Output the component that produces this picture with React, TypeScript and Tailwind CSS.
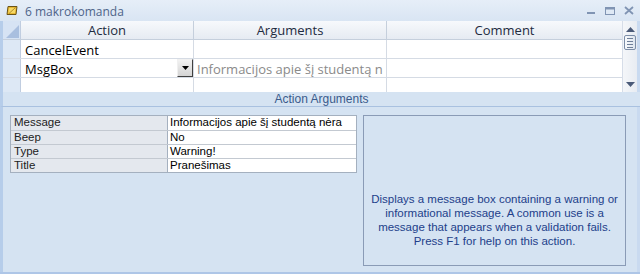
const gridFont = { fontFamily: '"Open Sans", "Noto Sans", sans-serif' };

function MacroIcon() {
  return (
    <svg width="12" height="11" viewBox="0 0 12 11">
      <path d="M2 1.5 H11 L10 9.5 H1 Z" fill="#e8b830" stroke="#6b5418" strokeWidth="1" />
      <path d="M3 3 H9.5 L9 8 H2.5 Z" fill="#f6d866" />
      <path d="M3 8.5 L9.5 2.5" stroke="#a07a1a" strokeWidth="0.8" />
    </svg>
  );
}

function WindowButtons() {
  return (
    <div className="flex items-center gap-[9px] pr-[6px]">
      <svg width="9" height="9" viewBox="0 0 9 9">
        <rect x="0" y="6" width="8" height="2" fill="#8094b3" />
      </svg>
      <svg width="10" height="9" viewBox="0 0 10 9">
        <rect x="0.5" y="1.5" width="9" height="7" fill="none" stroke="#8094b3" />
        <rect x="0.5" y="1.5" width="9" height="2" fill="#8094b3" />
      </svg>
      <svg width="10" height="9" viewBox="0 0 10 9">
        <path d="M1 1 L9 8 M9 1 L1 8" stroke="#8094b3" strokeWidth="1.8" />
      </svg>
    </div>
  );
}

function Scrollbar() {
  return (
    <div className="w-[15px] flex flex-col items-center bg-gradient-to-r from-[#f4f6f9] to-[#e8ecf2] border-l border-[#d6dde8]">
      <svg width="9" height="5" viewBox="0 0 9 5" className="mt-[6px]">
        <path d="M0 5 L4.5 0 L9 5 Z" fill="#4a5a78" />
      </svg>
      <div className="mt-[3px] w-[12px] h-[15px] rounded-[2px] border border-[#7d8ea8] bg-gradient-to-r from-[#f8fafc] to-[#dfe6ef] flex flex-col items-center justify-center gap-[2px]">
        <div className="w-[6px] h-px bg-[#6f7f99]" />
        <div className="w-[6px] h-px bg-[#6f7f99]" />
        <div className="w-[6px] h-px bg-[#6f7f99]" />
        <div className="w-[6px] h-px bg-[#6f7f99]" />
      </div>
      <div className="flex-1" />
      <svg width="9" height="5" viewBox="0 0 9 5" className="mb-[5px]">
        <path d="M0 0 L4.5 5 L9 0 Z" fill="#4a5a78" />
      </svg>
    </div>
  );
}

function DropButton() {
  return (
    <div className="w-[16px] h-[18px] border border-t-[#f0f0f0] border-l-[#f0f0f0] border-r-[#404040] border-b-[#404040] bg-gradient-to-b from-[#f2f2f2] to-[#d4d4d4] flex items-center justify-center">
      <svg width="7" height="4" viewBox="0 0 7 4">
        <path d="M0 0 H7 L3.5 4 Z" fill="#000" />
      </svg>
    </div>
  );
}

const gridRows = [
  { action: "CancelEvent", args: "", drop: false },
  { action: "MsgBox", args: "Informacijos apie šį studentą n", drop: true },
];

const props = [
  ["Message", "Informacijos apie šį studentą nėra"],
  ["Beep", "No"],
  ["Type", "Warning!"],
  ["Title", "Pranešimas"],
];

const helpLines = [
  "Displays a message box containing a warning or",
  "informational message. A common use is a",
  "message that appears when a validation fails.",
  "Press F1 for help on this action.",
];

export default function App() {
  return (
    <div
      className="w-[640px] h-[274px] overflow-hidden bg-[#d5e3f2] flex flex-col"
      style={{ fontFamily: '"Liberation Sans", Arial, sans-serif' }}
    >
      {/* title bar */}
      <div className="h-[21px] flex items-center bg-gradient-to-b from-[#e6eef8] to-[#d9e5f3] pl-[6px]">
        <MacroIcon />
        <span className="ml-[7px] pt-[2px] text-[12px] text-[#4e6489]" style={gridFont}>
          6 makrokomanda
        </span>
        <div className="flex-1" />
        <WindowButtons />
      </div>

      {/* grid */}
      <div className="h-[71px] flex border-l-[3px] border-[#b6cdea] border-r-[3px] border-r-[#c9daf0]">
        <div className="flex-1 flex flex-col bg-white" style={gridFont}>
          <div className="h-[19px] flex bg-gradient-to-b from-[#f7f9fc] to-[#e6ebf2] border-b border-[#c5cfdc] text-[13px] text-[#1e2b3f]">
            <div className="w-[18px] bg-[#d6e3f4] border-r border-[#c0cde0] relative overflow-hidden">
              <svg width="18" height="19" viewBox="0 0 18 19" className="absolute inset-0">
                <path d="M3 17 L16 4 V17 Z" fill="#a9bfdf" />
              </svg>
            </div>
            <div className="w-[173px] border-r border-[#c5cfdc] flex items-center justify-center pt-px leading-none">Action</div>
            <div className="w-[193px] border-r border-[#c5cfdc] flex items-center justify-center pt-px leading-none">Arguments</div>
            <div className="flex-1 flex items-center justify-center pt-px leading-none">Comment</div>
          </div>
          {gridRows.map((r) => (
            <div key={r.action} className="h-[19px] flex border-b border-[#d5dbe4] text-[13px]">
              <div className="w-[18px] bg-[#dde8f5] border-r border-[#c0cde0]" />
              <div className="w-[173px] border-r border-[#d5dbe4] flex items-center justify-between pl-[4px] text-black leading-none">
                <span className="pt-[2px]">{r.action}</span>
                {r.drop && <DropButton />}
              </div>
              <div className="w-[193px] border-r border-[#d5dbe4] flex items-center pl-[3px] pt-[2px] text-[#8a8a8a] leading-none whitespace-nowrap overflow-hidden">
                {r.args}
              </div>
              <div className="flex-1" />
            </div>
          ))}
          <div className="flex-1 flex">
            <div className="w-[18px] bg-[#dde8f5] border-r border-[#c0cde0]" />
            <div className="w-[173px] border-r border-[#d5dbe4]" />
            <div className="w-[193px] border-r border-[#d5dbe4]" />
            <div className="flex-1" />
          </div>
        </div>
        <Scrollbar />
      </div>

      {/* action arguments bar */}
      <div className="h-[15px] flex items-center justify-center border-l-[3px] border-[#b6cdea] border-b border-b-[#a9c1e0] text-[12px] text-[#3a5b8c] leading-none">
        Action Arguments
      </div>

      {/* lower pane */}
      <div className="flex-1 flex border-l-[3px] border-[#b6cdea] border-r-[3px] border-r-[#c9daf0] pl-[7px] pt-[8px] pb-[6px]">
        <div className="w-[347px]">
          <div className="border border-[#a4b0bf] bg-white text-[11.5px] text-black">
            {props.map(([k, v], i) => (
              <div key={k} className={`h-[14px] flex ${i > 0 ? "border-t border-[#c3c9d1]" : ""}`}>
                <div className="w-[157px] bg-[#e4e8ee] border-r border-[#a4b0bf] pl-[3px] flex items-center leading-none text-[#222]">{k}</div>
                <div className="flex-1 pl-[2px] flex items-center leading-none whitespace-nowrap overflow-hidden">{v}</div>
              </div>
            ))}
          </div>
        </div>
        <div className="ml-[6px] w-[263px] border border-[#8a9bb6] flex flex-col items-center pt-[76px]">
          {helpLines.map((l) => (
            <div key={l} className="text-[11.5px] leading-[14px] text-[#22408a] whitespace-nowrap">
              {l}
            </div>
          ))}
        </div>
      </div>
      <div className="h-[2px] bg-[#aec6e7]" />
    </div>
  );
}
